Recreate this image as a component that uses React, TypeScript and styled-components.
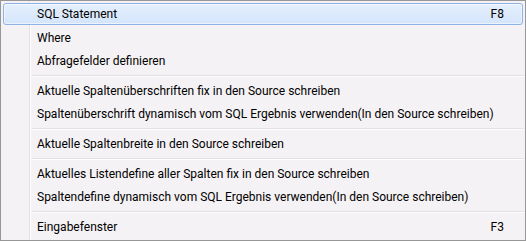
import styled, { createGlobalStyle } from "styled-components";

const GlobalStyle = createGlobalStyle`
    html, body {
        margin: 0;
        padding: 0;
        background: #f5f2f5;
    }
`;

type Entry = { label: string; key?: string; active?: boolean } | "sep";

const entries: Entry[] = [
    { label: "SQL Statement", key: "F8", active: true },
    { label: "Where" },
    { label: "Abfragefelder definieren" },
    "sep",
    { label: "Aktuelle Spaltenüberschriften fix in den Source schreiben" },
    { label: "Spaltenüberschrift dynamisch vom SQL Ergebnis verwenden(In den Source schreiben)" },
    "sep",
    { label: "Aktuelle Spaltenbreite in den Source schreiben" },
    "sep",
    { label: "Aktuelles Listendefine aller Spalten fix in den Source schreiben" },
    { label: "Spaltendefine dynamisch vom SQL Ergebnis verwenden(In den Source schreiben)" },
    "sep",
    { label: "Eingabefenster", key: "F3" },
];

const App = () => {
    return (
        <>
            <GlobalStyle />
            <Menu>
                {entries.map((e, i) =>
                    e === "sep" ? (
                        <Separator key={i} />
                    ) : (
                        <Item key={i} active={!!e.active}>
                            <Label>{e.label}</Label>
                            {e.key && <Shortcut>{e.key}</Shortcut>}
                        </Item>
                    )
                )}
            </Menu>
        </>
    );
};

export default App;

const Menu = styled.div`
    position: relative;
    width: 526px;
    height: 241px;
    box-sizing: border-box;
    border: 1px solid #979797;
    background: #f5f2f5;
    padding: 2px 2px;
    display: flex;
    flex-direction: column;
    font-family: Roboto, "Open Sans", sans-serif;
    font-size: 12px;
    color: #000;

    &::before {
        content: "";
        position: absolute;
        top: 0;
        bottom: 0;
        left: 28px;
        width: 1px;
        background: #e2e0e3;
        box-shadow: 1px 0 0 #ffffff;
    }
`;

const Item = styled.div<{ active: boolean }>`
    position: relative;
    z-index: 1;
    box-sizing: border-box;
    display: flex;
    align-items: center;
    padding: 0 18px 0 33px;
    border: 1px solid ${props => (props.active ? "#8db2e3" : "transparent")};
    border-radius: 3px;
    height: ${props => (props.active ? "22px" : "23px")};
    margin-bottom: ${props => (props.active ? "1px" : "0")};
    background: ${props => (props.active ? "linear-gradient(#e6f0fd, #d3e4fb)" : "none")};
    box-shadow: ${props => (props.active ? "inset 0 0 0 1px rgba(255,255,255,0.55)" : "none")};
`;

const Label = styled.span`
    flex: 1;
    white-space: nowrap;
`;

const Shortcut = styled.span`
    white-space: nowrap;
`;

const Separator = styled.div`
    height: 7px;
    margin-left: 29px;
    display: flex;
    align-items: center;
    &::after {
        content: "";
        display: block;
        width: 100%;
        height: 1px;
        background: #e2e0e3;
        box-shadow: 0 1px 0 #ffffff;
    }
`;
